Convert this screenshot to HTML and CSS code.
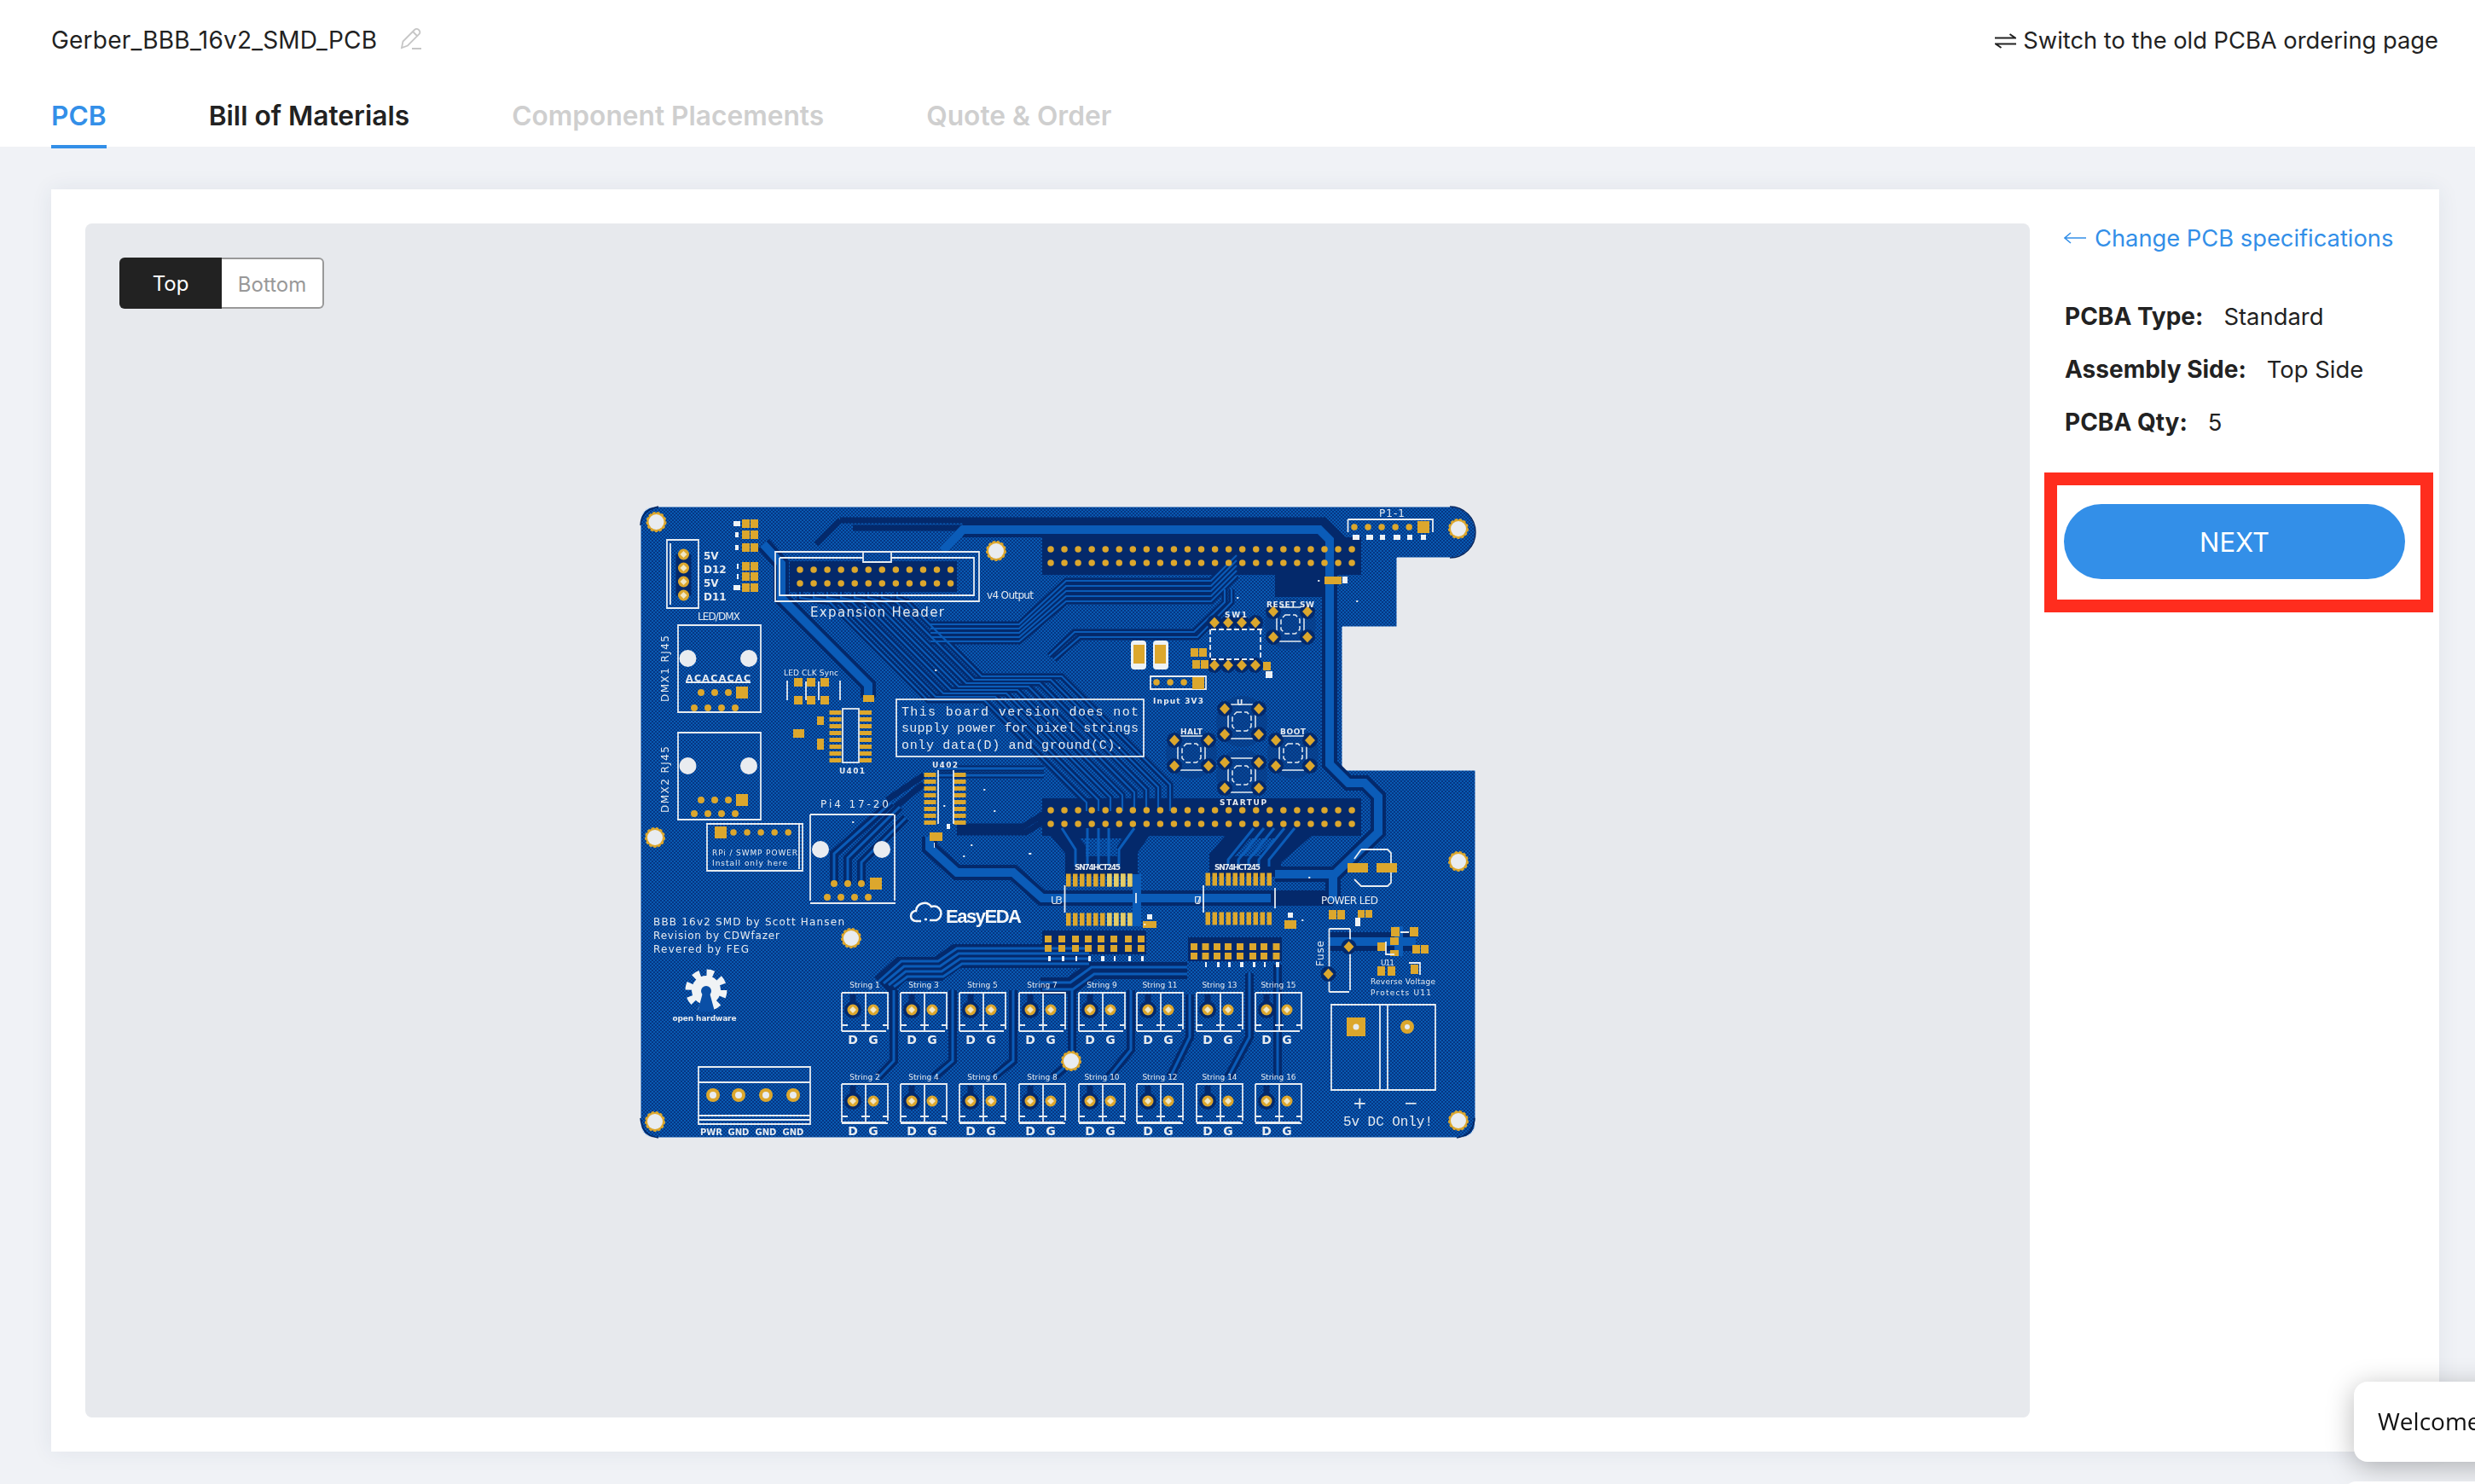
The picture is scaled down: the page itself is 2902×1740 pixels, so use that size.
FILE: index.html
```html
<!DOCTYPE html>
<html lang="en">
<head>
<meta charset="utf-8">
<title>PCBA order</title>
<link rel="stylesheet" href="styles.css">
</head>
<body>
<header class="topbar">
  <div class="title-row">
    <div class="title">
      <span>Gerber_BBB_16v2_SMD_PCB</span>
      <svg class="pencil" width="26" height="26" viewBox="0 0 26 26"><path d="M2 24 3.500 16.500 17 3Q19.500.8 22 3 24.500 5.500 22.500 8L9 21.500ZM15 5l5.500 5.500M14 25h11"/></svg>
    </div>
    <a class="switch-link">
      <svg class="swap" width="25" height="20" viewBox="0 0 25 20"><path d="M0 7.500H24L17.500 3M25 14.500H1L7.500 19"/></svg>
      <span>Switch to the old PCBA ordering page</span>
    </a>
  </div>
  <nav class="tabs">
    <a class="tab active">PCB</a>
    <a class="tab enabled">Bill of Materials</a>
    <a class="tab">Component Placements</a>
    <a class="tab">Quote &amp; Order</a>
  </nav>
</header>

<main class="content">
  <section class="card">
    <div class="viewer">
      <div class="toggle">
        <span class="toggle-on">Top</span>
        <span class="toggle-off">Bottom</span>
      </div>
      <svg class="board" width="982" height="742" viewBox="750 592 982 742">
        <defs>
          <pattern id="hatch" width="4" height="4" patternUnits="userSpaceOnUse">
            <rect width="4" height="4" fill="#0a5ab2"/>
            <rect width="2" height="2" fill="#053683"/>
            <rect x="2" y="2" width="2" height="2" fill="#053683"/>
          </pattern>
          <g id="hole">
            <circle r="11" class="gold"/>
            <circle r="10.500" class="hole-teeth"/>
            <circle r="9" class="drill"/>
          </g>
          <g id="dpad">
            <circle r="6.500" class="gold"/>
            <path class="cream" d="M0-4 4 0 0 4-4 0Z"/>
          </g>
          <g id="dia">
            <circle r="9" class="dark"/>
            <path class="gold" d="M0-6.500 6 0 0 6.500-6 0Z"/>
          </g>
          <g id="term">
            <circle cx="13" cy="20" r="10" class="dark"/>
            <path class="dk-line w6" d="M13 20V2"/>
            <path class="silk" d="M0 0H54V43M0 45V0M0 45H52M28 0V45M0 38H7M23 38H33M48 38H54"/>
            <use href="#dpad" x="13" y="20"/>
            <use href="#dpad" x="37" y="20"/>
            <text class="pin-letter" x="13" y="60">D</text>
            <text class="pin-letter" x="37" y="60">G</text>
          </g>
          <g id="tact">
            <circle r="30" class="halo"/>
            <path class="silk thin" d="M-13-20H13M-13 20H13M-16-9V9M16-9V9"/>
            <path class="silk thin dash" d="M-6-11H6L11-6V6L6 11H-6L-11 6V-6Z"/>
            <use href="#dia" x="-20" y="-15"/>
            <use href="#dia" x="20" y="-15"/>
            <use href="#dia" x="-20" y="15"/>
            <use href="#dia" x="20" y="15"/>
          </g>
          <g id="smd">
            <rect x="-5" y="-5" width="9" height="10" class="gold"/>
            <rect x="5" y="-5" width="9" height="10" class="gold"/>
          </g>
          <g id="res">
            <rect x="-4" y="-6" width="8" height="8" class="gold"/>
            <rect x="-4" y="5" width="8" height="8" class="gold"/>
          </g>
          <g id="fam">
            <path d="M938 693V700L973 705 1088 820H1154L1274 940V950"/>
            <path d="M954 693V700L986 705 1097 816H1167L1288 937V950"/>
            <path d="M970 693V700L999 705 1106 812H1180L1302 934V950"/>
            <path d="M986 693V700L1012 705 1115 808H1193L1316 931V950"/>
            <path d="M1002 693V700L1025 705 1124 804H1206L1330 928V950"/>
            <path d="M1018 693V700L1038 705 1133 800H1219L1344 925V950"/>
            <path d="M1034 693V700L1051 705 1142 796H1232L1358 922V950"/>
            <path d="M1052 693V700L1064 705 1151 792H1245L1372 919V950"/>
          </g>
          <g id="buslines">
            <path d="M1091 731H1195L1250 680H1420L1450 650"/>
            <path d="M1091 736H1195L1250 686H1420L1450 656"/>
            <path d="M1091 741H1195L1250 692H1420L1450 662"/>
            <path d="M1091 746H1195L1250 698H1420L1450 668"/>
            <path d="M1091 751H1195L1250 704H1420L1450 674"/>
            <path d="M1230 768 1260 740H1400L1436 705V690"/>
            <path d="M1236 772 1266 746H1404L1444 705V690"/>
          </g>
        </defs>

        <path fill="url(#hatch)" class="outline" d="M770 593H1700A30 30 0 0 1 1700 653H1638V734H1574V902H1730V1313Q1730 1333 1710 1333H770Q751 1333 751 1313V613Q751 593 770 593Z"/>
        <path class="edge-arc" d="M1700 593A30 30 0 0 1 1700 653M751 1310Q753 1331 772 1333M1729 1310Q1727 1331 1708 1333M751 615Q752 597 772 593"/>

        <!-- dark copper clearances -->
        <path class="dk-line w6" d="M985 609H1553L1575 631V654M957 637 985 609"/>
        <path class="dk-line w6" d="M1000 618H1540L1566 644"/>
        <path class="dk-line w44" d="M1222 651H1596"/>
        <path class="dk-line w44" d="M1222 957H1596"/>
        <use href="#buslines" class="bus-dark"/>
        <use href="#fam" class="bus-dark"/>
        <rect class="dark" x="926" y="657" width="196" height="36"/>
        <rect class="dark" x="1495" y="665" width="55" height="34"/>
        <rect class="dark" x="1222" y="1090" width="122" height="28"/>
        <rect class="dark" x="1393" y="1098" width="110" height="28"/>
        <path class="dk-line w18" d="M1129 620H1547L1559 632V895L1581 917H1600L1616 933V975L1565 1024H1495"/>
        <path class="dk-line w18" d="M895 637 916 660V700L1018 802V817"/>
        <path class="dk-line w18" d="M1090 980V993L1122 1022H1188L1222 1052H1563M1563 1024V1056"/>
        <path class="dk-line w6" d="M1100 900H1224M1100 908H1224M1122 968H1200L1229 950M1122 975H1203L1232 957M1083 908 1040 937M1083 918 1050 945"/>
        <path class="dk-line w24" d="M1261 1015V995L1240 970H1339L1322 995V1015Z"/>
        <path class="dk-line w24" d="M1430 1015V1005L1460 970H1530L1490 1005V1015Z"/>
        <path class="dk-line w26" d="M1277 1120H1122L1100 1135H1057L1035 1155"/>
        <path class="dk-line w20" d="M1392 1137H1280L1255 1155H1220"/>
        <path class="dk-line w8" d="M1048 1160V1243L1030 1262M1117 1160V1243L1095 1262M1188 1160V1243L1165 1262M1257 1160V1243L1235 1262M1326 1160V1230L1300 1262M1395 1165V1215L1372 1262M1465 1140V1215L1440 1262M1498 1130V1262"/>
        <path class="dk-line w22" d="M1559 1103H1660"/>
        <path class="dk-line w10" d="M978 1035V1000L1045 940M994 1035V1005L1055 945M1010 1035V1010L1062 958"/>

        <!-- copper traces -->
        <use href="#buslines" class="bus-light"/>
        <use href="#fam" class="bus-light"/>
        <g class="bus">
          <path d="M1261 1015V995L1245 970M1275 1015V970M1288 1015V970M1300 1015V970M1312 1015V995L1330 970"/>
          <path d="M1440 1015V1007L1470 970M1452 1015V1007L1482 970M1464 1015V1007L1494 970M1476 1015V1007L1506 970M1488 1015V1007L1518 970"/>
          <path d="M1277 1111H1122L1100 1126H1057L1030 1150"/>
          <path d="M1277 1117H1124L1102 1132H1060L1036 1152"/>
          <path d="M1277 1123H1126L1104 1138H1062L1042 1154"/>
          <path d="M1277 1129H1128L1106 1144H1064L1048 1156"/>
          <path d="M1392 1133H1280L1255 1151H1220M1392 1141H1283L1258 1159H1222"/>
          <path d="M1048 1160V1243L1030 1262M1117 1160V1243L1095 1262M1188 1160V1243L1165 1262M1257 1160V1243L1235 1262M1326 1160V1230L1300 1262M1395 1165V1215L1372 1262M1465 1140V1215L1440 1262M1498 1130V1262"/>
          <path d="M978 1035V1000L1045 940M994 1035V1005L1055 945M1010 1035V1010L1062 958"/>
          <path d="M1100 900H1224M1100 908H1224"/>
        </g>
        <path class="thick" d="M1105 645 1129 620H1547L1559 632V895L1581 917H1600L1616 933V975L1565 1024H1495M1563 1024V1056"/>
        <path class="thick" d="M895 637 916 660V700L1018 802V817"/>
        <path class="thick" d="M1090 980V993L1122 1022H1188L1222 1052H1490M1333 1024V1085"/>
        <path class="thick" d="M1559 1103H1660M1640 1085V1120"/>

        <!-- note box -->
        <rect x="1051" y="819" width="290" height="67" fill="url(#hatch)" class="silk"/>
        <text class="silk-text mono" x="1057" y="838" textLength="278" lengthAdjust="spacing">This board version does not</text>
        <text class="silk-text mono" x="1057" y="857" textLength="278" lengthAdjust="spacing">supply power for pixel strings</text>
        <text class="silk-text mono" x="1057" y="877" textLength="260" lengthAdjust="spacing">only data(D) and ground(C).</text>

        <!-- mounting holes -->
        <use href="#hole" x="769.500" y="611"/>
        <use href="#hole" x="1168" y="645"/>
        <use href="#hole" x="1710" y="619"/>
        <use href="#hole" x="768" y="981"/>
        <use href="#hole" x="998" y="1099"/>
        <use href="#hole" x="768" y="1314"/>
        <use href="#hole" x="1256" y="1243"/>
        <use href="#hole" x="1710" y="1009"/>
        <use href="#hole" x="1710" y="1313"/>

        <!-- left 4 pin connector -->
        <path class="silk" d="M782 632H819V712H782ZM786 636V708M819 655V695"/>
        <line class="halo-line" x1="801.500" y1="649" x2="801.500" y2="697.500"/>
        <use href="#dpad" x="801.500" y="649"/>
        <use href="#dpad" x="801.500" y="665"/>
        <use href="#dpad" x="801.500" y="681"/>
        <use href="#dpad" x="801.500" y="697"/>
        <text class="silk-text bold" x="825" y="655">5V</text>
        <text class="silk-text bold" x="825" y="671">D12</text>
        <text class="silk-text bold" x="825" y="687">5V</text>
        <text class="silk-text bold" x="825" y="703">D11</text>
        <text class="silk-text" x="818" y="726" textLength="50">LED/DMX</text>

        <!-- top-left SMD column -->
        <use href="#smd" x="875" y="613"/>
        <use href="#smd" x="875" y="626"/>
        <use href="#smd" x="875" y="641"/>
        <use href="#smd" x="875" y="663"/>
        <use href="#smd" x="875" y="675"/>
        <use href="#smd" x="875" y="688"/>
        <path class="white-bits" d="M860 613h8M862 626h4M862 641h4M864 663h2M864 675h2M860 688h8"/>

        <!-- expansion header -->
        <path class="silk" d="M909 646H1148V704H909ZM914 653H1012M1045 653H1142V697H914V653M1012 646V658H1045V646"/>
        <line class="pad-row" x1="938" y1="667" x2="1120" y2="667"/>
        <line class="pad-row" x1="938" y1="683" x2="1120" y2="683"/>
        <text class="silk-text wide" x="950" y="722" textLength="157">Expansion Header</text>
        <text class="silk-text" x="1157" y="701" textLength="55">v4 Output</text>

        <!-- long headers -->
        <line class="pad-row" x1="1232" y1="643" x2="1590" y2="643"/>
        <line class="pad-row" x1="1232" y1="659" x2="1590" y2="659"/>
        <line class="pad-row" x1="1232" y1="949" x2="1590" y2="949"/>
        <line class="pad-row" x1="1232" y1="965" x2="1590" y2="965"/>

        <!-- top right connector -->
        <path class="silk" d="M1580.500 608H1680V623M1580.500 623V608"/>
        <line class="pad-row" x1="1588" y1="617" x2="1656" y2="617"/>
        <rect class="gold" x="1662" y="610" width="14" height="14"/>
        <path class="white-bits" d="M1586 629h8M1602 629h8M1618 629h6M1634 629h8M1650 629h6M1666 629h6"/>
        <text class="silk-text" x="1617" y="605" textLength="30">P1-1</text>

        <!-- ethernet jacks -->
        <path class="silk" d="M795 732H892V834H795ZM795 858H892V960H795ZM950 954V1055M950 1058H1050M1049 954V1055M950 954H1048"/>
        <text class="silk-text side" transform="translate(784 822) rotate(-90)" textLength="78">DMX1 RJ45</text>
        <text class="silk-text side" transform="translate(784 952) rotate(-90)" textLength="78">DMX2 RJ45</text>
        <text class="silk-text" x="962" y="946" textLength="80">Pi4 17-20</text>
        <circle class="drill" cx="806.500" cy="771" r="10"/>
        <circle class="drill" cx="878" cy="771" r="10"/>
        <circle class="drill" cx="806.500" cy="897" r="10"/>
        <circle class="drill" cx="878" cy="897" r="10"/>
        <circle class="drill" cx="962" cy="995" r="10"/>
        <circle class="drill" cx="1034" cy="995" r="10"/>
        <rect class="silk-fill" x="804" y="798" width="76" height="2"/>
        <text class="silk-text bold jack-label" x="804" y="798" textLength="76">ACACACAC</text>
        <path class="pad-small" d="M822 811h.01M838 811h.01M854 811h.01M814 829h.01M830 829h.01M846 829h.01M862 829h.01M822 937h.01M838 937h.01M854 937h.01M814 953h.01M830 953h.01M846 953h.01M862 953h.01M978 1035h.01M994 1035h.01M1010 1035h.01M970 1051h.01M986 1051h.01M1002 1051h.01M1018 1051h.01"/>
        <rect class="gold" x="863" y="804" width="14" height="14"/>
        <rect class="gold" x="863" y="930" width="14" height="14"/>
        <rect class="gold" x="1020" y="1028" width="14" height="14"/>

        <!-- pixel level shifter parts -->
        <text class="silk-text tiny" x="919" y="791" textLength="64">LED CLK Sync</text>
        <path class="silk" d="M923 797V820M985 797V820"/>
        <path class="silk" d="M945 798V820M960 798V820"/>
        <rect class="gold" x="931" y="794" width="10" height="10"/>
        <rect class="gold" x="946" y="794" width="10" height="10"/>
        <rect class="gold" x="962" y="794" width="10" height="10"/>
        <rect class="gold" x="931" y="815" width="10" height="10"/>
        <rect class="gold" x="946" y="815" width="10" height="10"/>
        <rect class="gold" x="962" y="815" width="10" height="10"/>
        <rect class="gold" x="1012" y="814" width="13" height="8"/>
        <rect class="gold" x="930" y="854" width="13" height="10"/>
        <rect class="gold" x="958" y="839" width="8" height="10"/>
        <rect class="gold" x="958" y="865" width="8" height="13"/>
        <line class="ic-v" x1="979.500" y1="832" x2="979.500" y2="895"/>
        <line class="ic-v" x1="1015" y1="832" x2="1015" y2="895"/>
        <rect class="silk" x="988" y="830" width="19" height="63"/>
        <text class="silk-text bold tiny" x="984" y="906" textLength="30">U401</text>
        <line class="ic-v" x1="1090.500" y1="905" x2="1090.500" y2="968"/>
        <line class="ic-v" x1="1125.500" y1="905" x2="1125.500" y2="968"/>
        <path class="silk" d="M1100 902V965M1118 902V965"/>
        <text class="silk-text bold tiny" x="1093" y="899" textLength="30">U402</text>
        <rect class="gold" x="1090" y="975" width="15" height="10"/>
        <path class="white-bits" d="M1095 990h1M1110 968h4"/>

        <!-- 5v module box -->
        <path class="silk" d="M829 965H941V1020H829ZM937 965V1018"/>
        <rect class="gold" x="838" y="968" width="14" height="14"/>
        <line class="pad-row" x1="860" y1="975" x2="926" y2="975"/>
        <text class="silk-text tiny" x="835" y="1002" textLength="100">RPi / SWMP POWER</text>
        <text class="silk-text tiny" x="835" y="1014" textLength="88">Install only here</text>

        <!-- credits + logos -->
        <text class="silk-text" x="766" y="1084" textLength="224">BBB 16v2 SMD by Scott Hansen</text>
        <text class="silk-text" x="766" y="1100" textLength="148">Revision by CDWfazer</text>
        <text class="silk-text" x="766" y="1116" textLength="112">Revered by FEG</text>
        <g class="gear">
          <circle cx="828" cy="1160" r="17"/>
          <circle class="gear-teeth" cx="828" cy="1160" r="20"/>
          <circle class="gear-hole" cx="828" cy="1161" r="6"/>
          <path class="gear-hole" d="M824 1163H832L838 1185H818Z"/>
        </g>
        <text class="silk-text bold tiny" x="788.500" y="1196" textLength="75">open hardware</text>
        <path class="cloud" d="M1080 1079H1074A6 6 0 0 1 1074 1067 10 10 0 0 1 1092 1062 8 8 0 0 1 1098 1078H1090M1084 1077h3"/>
        <text class="easy" x="1109" y="1081" textLength="89">EasyEDA</text>

        <!-- big SOP chips -->
        <text class="silk-text bold tiny" x="1260" y="1019" textLength="54">SN74HCT245</text>
        <text class="silk-text bold tiny" x="1424" y="1019" textLength="54">SN74HCT245</text>
        <line class="ic-h" x1="1250" y1="1031" x2="1330" y2="1031"/>
        <line class="ic-h" x1="1250" y1="1077" x2="1330" y2="1077"/>
        <line class="ic-h pale" x1="1298" y1="1031" x2="1330" y2="1031"/>
        <line class="ic-h pale" x1="1298" y1="1077" x2="1330" y2="1077"/>
        <line class="ic-h" x1="1413.500" y1="1030" x2="1493.500" y2="1030"/>
        <line class="ic-h" x1="1413.500" y1="1076" x2="1493.500" y2="1076"/>
        <path class="silk" d="M1248.500 1037V1069M1332 1046V1058M1411 1037V1069M1495 1040V1064"/>
        <text class="silk-text" x="1232" y="1059" textLength="14">U3</text>
        <text class="silk-text" x="1400" y="1059" textLength="9">U7</text>
        <rect class="gold" x="1340" y="1079" width="16" height="8"/>
        <rect class="gold" x="1506" y="1078" width="14" height="10"/>
        <path class="white-bits" d="M1345 1074h6M1510 1072h6"/>

        <!-- resistor arrays -->
        <use href="#res" x="1229" y="1102"/>
        <use href="#res" x="1245" y="1102"/>
        <use href="#res" x="1261" y="1102"/>
        <use href="#res" x="1276" y="1102"/>
        <use href="#res" x="1291" y="1102"/>
        <use href="#res" x="1306" y="1102"/>
        <use href="#res" x="1323" y="1102"/>
        <use href="#res" x="1338" y="1102"/>
        <use href="#res" x="1400" y="1111"/>
        <use href="#res" x="1413.500" y="1111"/>
        <use href="#res" x="1427" y="1111"/>
        <use href="#res" x="1440" y="1111"/>
        <use href="#res" x="1454" y="1111"/>
        <use href="#res" x="1469" y="1111"/>
        <use href="#res" x="1482" y="1111"/>
        <use href="#res" x="1496.500" y="1111"/>
        <path class="white-bits" d="M1229 1123h3M1245 1123h3M1261 1123h2M1276 1123h3M1291 1123h4M1306 1123h2M1323 1123h3M1338 1123h3M1413 1130h2M1427 1130h3M1440 1130h3M1454 1130h4M1469 1130h3M1482 1130h2M1496 1130h4"/>

        <!-- string terminals -->
        <use href="#term" x="987" y="1163"/>
        <use href="#term" x="1056" y="1163"/>
        <use href="#term" x="1125" y="1163"/>
        <use href="#term" x="1195" y="1163"/>
        <use href="#term" x="1265" y="1163"/>
        <use href="#term" x="1333" y="1163"/>
        <use href="#term" x="1403" y="1163"/>
        <use href="#term" x="1472" y="1163"/>
        <use href="#term" x="987" y="1270"/>
        <use href="#term" x="1056" y="1270"/>
        <use href="#term" x="1125" y="1270"/>
        <use href="#term" x="1195" y="1270"/>
        <use href="#term" x="1265" y="1270"/>
        <use href="#term" x="1333" y="1270"/>
        <use href="#term" x="1403" y="1270"/>
        <use href="#term" x="1472" y="1270"/>
        <path class="silk" d="M987 1316H1041M1056 1316H1110M1125 1316H1179M1195 1316H1249M1265 1316H1319M1333 1316H1387M1403 1316H1457M1472 1316H1526"/>
        <g class="string-labels">
          <text x="1014" y="1157">String 1</text>
          <text x="1083" y="1157">String 3</text>
          <text x="1152" y="1157">String 5</text>
          <text x="1222" y="1157">String 7</text>
          <text x="1292" y="1157">String 9</text>
          <text x="1360" y="1157">String 11</text>
          <text x="1430" y="1157">String 13</text>
          <text x="1499" y="1157">String 15</text>
          <text x="1014" y="1265">String 2</text>
          <text x="1083" y="1265">String 4</text>
          <text x="1152" y="1265">String 6</text>
          <text x="1222" y="1265">String 8</text>
          <text x="1292" y="1265">String 10</text>
          <text x="1360" y="1265">String 12</text>
          <text x="1430" y="1265">String 14</text>
          <text x="1499" y="1265">String 16</text>
        </g>

        <!-- power input terminal -->
        <path class="silk" d="M819 1250H950V1317H819ZM819 1268H950M819 1307H950M819 1312H950"/>
        <circle class="gold" cx="836" cy="1283" r="8"/>
        <circle class="gold" cx="866" cy="1283" r="8"/>
        <circle class="gold" cx="898" cy="1283" r="8"/>
        <circle class="gold" cx="930" cy="1283" r="8"/>
        <circle class="drill" cx="836" cy="1283" r="4"/>
        <circle class="drill" cx="866" cy="1283" r="4"/>
        <circle class="drill" cx="898" cy="1283" r="4"/>
        <circle class="drill" cx="930" cy="1283" r="4"/>
        <g class="power-labels">
          <text x="834" y="1330">PWR</text>
          <text x="866" y="1330">GND</text>
          <text x="898" y="1330">GND</text>
          <text x="930" y="1330">GND</text>
        </g>

        <!-- tact switches + centre parts -->
        <use href="#tact" x="1513" y="731"/>
        <use href="#tact" x="1456" y="845"/>
        <use href="#tact" x="1397" y="882"/>
        <use href="#tact" x="1456" y="908"/>
        <use href="#tact" x="1516" y="882"/>
        <text class="silk-text bold tiny" x="1485" y="711" textLength="56">RESET SW</text>
        <text class="silk-text bold tiny" x="1384" y="860" textLength="26">HALT</text>
        <text class="silk-text bold tiny" x="1501" y="860" textLength="30">BOOT</text>
        <text class="silk-text bold tiny" x="1450" y="826" textLength="12">U</text>
        <text class="silk-text bold tiny" x="1430" y="943" textLength="55">STARTUP</text>
        <use href="#dia" x="1424" y="729"/>
        <use href="#dia" x="1440" y="729"/>
        <use href="#dia" x="1456" y="729"/>
        <use href="#dia" x="1472" y="729"/>
        <use href="#dia" x="1424" y="779"/>
        <use href="#dia" x="1440" y="779"/>
        <use href="#dia" x="1456" y="779"/>
        <use href="#dia" x="1472" y="779"/>
        <text class="silk-text bold tiny" x="1436" y="723" textLength="26">SW1</text>
        <path class="silk dash" d="M1420 737H1480M1478 737V772M1420 772H1470M1419 737V770"/>
        <rect class="white-block" x="1326" y="750" width="18" height="34" rx="4"/>
        <rect class="white-block" x="1352" y="750" width="18" height="34" rx="4"/>
        <rect class="gold" x="1329" y="755" width="13" height="22"/>
        <rect class="gold" x="1354" y="755" width="13" height="22"/>
        <use href="#smd" x="1401" y="764"/>
        <use href="#smd" x="1403" y="778"/>
        <path class="silk" d="M1349 792H1414V807H1349Z"/>
        <line class="pad-row" x1="1356" y1="799" x2="1390" y2="799"/>
        <rect class="gold" x="1398" y="793" width="14" height="14"/>
        <text class="silk-text bold tiny" x="1352" y="824" textLength="59">Input 3V3</text>
        <rect class="gold" x="1481" y="775" width="9" height="10"/>
        <rect class="white-block" x="1484" y="786" width="8" height="8"/>
        <rect class="gold" x="1553" y="675" width="20" height="9"/>
        <rect class="white-block" x="1574" y="675" width="6" height="8"/>

        <!-- power section -->
        <path class="silk" d="M1596 995H1627L1631 999V1034L1627 1038H1596L1588 1030M1588 1006 1596 995"/>
        <rect class="gold" x="1580" y="1011" width="24" height="11"/>
        <rect class="gold" x="1614" y="1011" width="24" height="11"/>
        <text class="silk-text" x="1549" y="1059" textLength="67">POWER LED</text>
        <rect class="gold" x="1558" y="1066" width="9" height="11"/>
        <rect class="gold" x="1568" y="1066" width="9" height="11"/>
        <rect class="gold" x="1592" y="1066" width="8" height="9"/>
        <rect class="gold" x="1601" y="1066" width="8" height="9"/>
        <rect class="white-block" x="1589" y="1075" width="6" height="10"/>
        <path class="silk" d="M1558.500 1088V1162M1583 1088V1160M1558.500 1088H1583M1558.500 1162H1582"/>
        <use href="#dia" x="1581.500" y="1109"/>
        <use href="#dia" x="1557.500" y="1141"/>
        <text class="silk-text side" transform="translate(1552 1132) rotate(-90)" textLength="30">Fuse</text>
        <rect class="gold" x="1631" y="1086" width="10" height="11"/>
        <rect class="gold" x="1653" y="1086" width="10" height="11"/>
        <rect class="gold" x="1615" y="1104" width="10" height="10"/>
        <rect class="gold" x="1630" y="1098" width="10" height="9"/>
        <rect class="gold" x="1630" y="1113" width="10" height="7"/>
        <rect class="gold" x="1656" y="1107" width="9" height="10"/>
        <rect class="gold" x="1666" y="1107" width="9" height="10"/>
        <rect class="gold" x="1615" y="1132" width="9" height="11"/>
        <rect class="gold" x="1627" y="1132" width="9" height="11"/>
        <rect class="gold" x="1654" y="1130" width="9" height="11"/>
        <path class="silk" d="M1625 1103V1118H1635M1642 1092H1652M1652 1128H1665V1142"/>
        <text class="silk-text tiny" x="1619" y="1131" textLength="16">U11</text>
        <text class="silk-text tiny" x="1607" y="1153" textLength="76">Reverse Voltage</text>
        <text class="silk-text tiny" x="1607" y="1166" textLength="71">Protects U11</text>
        <path class="silk" d="M1561 1177H1683V1277H1561ZM1618 1177V1277M1627 1177V1277"/>
        <rect class="gold" x="1579" y="1192" width="22" height="22"/>
        <circle class="drill" cx="1590" cy="1203" r="3.500"/>
        <circle class="gold" cx="1650" cy="1203" r="8"/>
        <circle class="drill" cx="1650" cy="1203" r="3"/>
        <text class="silk-text sign" x="1586" y="1299">+</text>
        <text class="silk-text sign" x="1646" y="1299">−</text>
        <text class="silk-text big" x="1575" y="1319" textLength="105">5v DC Only!</text>

        <path class="via" d="M1097 785h.5M1107 944h.5M1154 925h.5M1166 950h.5M1208 1000h.5M1139 990h.5M1000 963h.5M1546 680h.5M1591 704h.5M1451 700h.5M1130 1003h.5M1207 1000h.5M1342 1083h.5M1527 1078h.5M1535 1028h.5"/>
      </svg>
    </div>

    <aside class="side-panel">
      <a class="back-link">
        <svg class="back-arrow" width="26" height="14" viewBox="0 0 26 14"><path d="M26 7H1M8 1 1 7 8 13"/></svg>
        <span>Change PCB specifications</span>
      </a>
      <dl class="specs">
        <div class="spec"><dt>PCBA Type:</dt><dd>Standard</dd></div>
        <div class="spec"><dt>Assembly Side:</dt><dd>Top Side</dd></div>
        <div class="spec"><dt>PCBA Qty:</dt><dd>5</dd></div>
      </dl>
      <div class="next-wrap">
        <button class="next">NEXT</button>
        <span class="highlight"></span>
      </div>
    </aside>
  </section>
</main>

<div class="chat">Welcome</div>
<div class="chat-next"></div>
</body>
</html>
```

FILE: styles.css
```css
* { box-sizing: border-box; }
html, body { margin: 0; height: 1740px; overflow: hidden; }
body { background: #f0f2f6; font-family: Inter, "Liberation Sans", sans-serif; color: #222; font-size: 28px; }

.topbar { height: 172px; background: #fff; }
.title-row { height: 94px; padding: 0 43px 0 60px; display: flex; align-items: center; justify-content: space-between; }
.title { display: flex; align-items: center; gap: 27px; letter-spacing: .2px; }
.pencil { fill: none; stroke: #c6c6c6; stroke-width: 1.800; margin-top: -4px; }
.switch-link { display: flex; align-items: center; gap: 8px; font-size: 27.300px; }
.swap { fill: none; stroke: #222; stroke-width: 2; }

.tabs { display: flex; gap: 120px; padding-left: 60px; }
.tab { display: block; height: 80px; padding-top: 23px; line-height: 38px; font-size: 31.700px; font-weight: 600; color: #cfcfcf; border-bottom: 4px solid transparent; }
.tab.active { color: #338fe8; border-bottom-color: #338fe8; }
.tab.enabled { color: #222; }

.content { padding: 50px 42px 0 60px; }
.card { height: 1480px; padding: 40px; background: #fff; display: flex; gap: 40px; box-shadow: 0 0 24px rgba(40, 60, 100, .08); }

.viewer { position: relative; flex: none; width: 2280px; height: 1400px; padding: 4px 0 0 2px; background: #e7e9ed; border-radius: 8px; display: flex; align-items: center; justify-content: center; }
.toggle { position: absolute; left: 40px; top: 40px; display: flex; height: 60px; font-size: 24px; }
.toggle-on { width: 120px; display: flex; align-items: center; justify-content: center; background: #222; color: #fff; border-radius: 6px 0 0 6px; }
.toggle-off { width: 120px; padding-top: 3px; display: flex; align-items: center; justify-content: center; background: #fff; color: #999; border: 2px solid #999; border-left: 0; border-radius: 0 6px 6px 0; }
.board { filter: blur(.4px); }

.side-panel { flex: none; width: 400px; }
.back-link { display: flex; align-items: center; gap: 10px; height: 34px; font-size: 27.300px; color: #338fe8; }
.back-arrow { fill: none; stroke: #338fe8; stroke-width: 1.500; }
.specs { margin: 44px 0 0; padding-left: 1px; }
.spec { display: flex; height: 62px; line-height: 62px; }
.spec dt { font-weight: 700; }
.spec dd { margin: 0 0 0 24px; font-size: 27.400px; }
.next-wrap { position: relative; margin-top: 65px; height: 88px; }
.next { display: block; width: 400px; height: 88px; border: 0; border-radius: 44px; background: #338fe8; color: #fff; font: 400 31px Inter, "Liberation Sans", sans-serif; }
.highlight { position: absolute; left: -23px; right: -33px; top: -37px; bottom: -39px; border: 15px solid #ff2d1e; }

.chat { position: fixed; left: 2760px; top: 1620px; width: 240px; height: 94px; padding: 0 0 0 28px; line-height: 92px; background: #fff; border-radius: 16px; font-family: "Open Sans", sans-serif; font-size: 28px; color: #111; box-shadow: 0 6px 32px rgba(0, 0, 0, .28); }
.chat-next { position: fixed; left: 2747px; top: 1737px; width: 250px; height: 60px; background: #fff; border-radius: 16px; }

/* board artwork */
.outline { stroke: #e8eef6; stroke-width: 1; }
.edge-arc { fill: none; stroke: #03245e; stroke-width: 1.500; }
.dark { fill: #04296b; }
.dk-line { fill: none; stroke: #04296b; stroke-linejoin: miter; }
.w6 { stroke-width: 7px; }
.w8 { stroke-width: 10px; }
.w10 { stroke-width: 10px; }
.w18 { stroke-width: 18px; }
.w20 { stroke-width: 20px; }
.w22 { stroke-width: 22px; }
.w24 { stroke-width: 24px; }
.w26 { stroke-width: 28px; }
.w44 { stroke-width: 44px; }
.bus-dark { fill: none; stroke: #04296b; stroke-width: 7px; }
.bus-light { fill: none; stroke: #0b5cb8; stroke-width: 2.200px; }
.bus path { fill: none; stroke: #0b5cb8; stroke-width: 3px; }
.thick { fill: none; stroke: #0b5cb8; stroke-width: 10px; }
.gold { fill: #dca72d; }
.cream { fill: #f0e6c4; }
.drill { fill: #e9ecf0; }
.hole-teeth { fill: none; stroke: #dca72d; stroke-width: 3px; stroke-dasharray: 3 2; }
.halo { fill: #073a84; opacity: .55; }
.halo-line { stroke: #04296b; stroke-width: 18px; }
.silk { fill: none; stroke: #e6ebf0; stroke-width: 1.800px; }
.silk.thin { stroke-width: 1.500px; }
.silk.dash { stroke-dasharray: 6 3; }
.silk-fill { fill: #e6ebf0; }
.silk-text { fill: #e6ebf0; font-family: "DejaVu Sans", sans-serif; font-size: 12px; }
.silk-text.mono { font-family: "Liberation Mono", monospace; font-size: 15px; }
.silk-text.wide { font-size: 15px; }
.silk-text.bold { font-weight: 700; }
.silk-text.tiny { font-size: 9px; }
.silk-text.side { font-size: 12px; }
.silk-text.sign { font-size: 20px; }
.silk-text.big { font-size: 16px; font-family: "Liberation Mono", monospace; }
.silk-text.jack-label { font-size: 11px; }
.pin-letter { fill: #e6ebf0; font: 700 14px "DejaVu Sans", sans-serif; text-anchor: middle; }
.string-labels text { fill: #e6ebf0; font: 400 9px "DejaVu Sans", sans-serif; text-anchor: middle; }
.power-labels text { fill: #e6ebf0; font: 700 10px "DejaVu Sans", sans-serif; text-anchor: middle; }
.white-bits { fill: none; stroke: #eef2f5; stroke-width: 6px; }
.white-block { fill: #eef2f5; }
.pad-row { stroke: #dca72d; stroke-width: 7.500px; stroke-linecap: round; stroke-dasharray: 0 16.050; }
.pad-small { fill: none; stroke: #dca72d; stroke-width: 8px; stroke-linecap: round; }
.ic-v { stroke: #dca72d; stroke-width: 14px; stroke-dasharray: 5 3; }
.ic-h { stroke: #dca72d; stroke-width: 15px; stroke-dasharray: 5.500 2.500; }
.ic-h.pale { stroke: #e3cd6a; }
.gear { fill: #f0f3f5; }
.gear-teeth { fill: none; stroke: #f0f3f5; stroke-width: 9px; stroke-dasharray: 8 7.700; }
.gear-hole { fill: #0a4fa6; }
.cloud { fill: none; stroke: #f4f6f8; stroke-width: 2.500px; }
.easy { fill: #f4f6f8; font: 700 22px "Liberation Sans", sans-serif; }
.via { fill: none; stroke: #eef2f5; stroke-width: 2px; stroke-linecap: round; }
```
